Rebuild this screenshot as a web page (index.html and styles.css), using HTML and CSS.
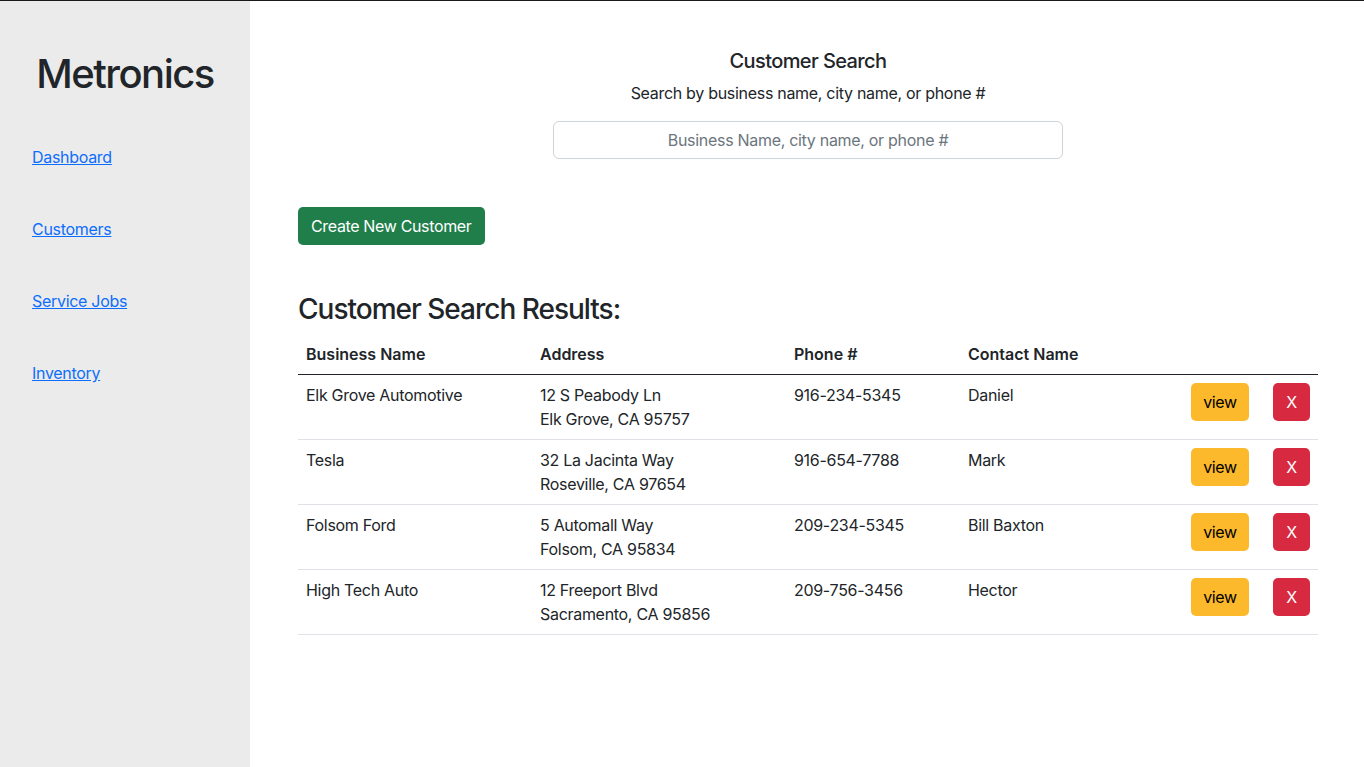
FILE: index.html
```html
<!DOCTYPE html>
<html lang="en">
<head>
<meta charset="utf-8">
<title>Metronics - Customers</title>
<link rel="stylesheet" href="styles.css">
</head>
<body>
<div class="app">
  <aside class="sidebar">
    <h1 class="brand">Metronics</h1>
    <nav class="nav">
      <a href="#">Dashboard</a>
      <a href="#">Customers</a>
      <a href="#">Service Jobs</a>
      <a href="#">Inventory</a>
    </nav>
  </aside>
  <main class="main">
    <section class="search">
      <h5 class="search-title">Customer Search</h5>
      <p class="search-sub">Search by business name, city name, or phone #</p>
      <input class="search-input" type="text" placeholder="Business Name, city name, or phone #">
    </section>
    <div class="actions">
      <button class="btn btn-success">Create New Customer</button>
    </div>
    <h3 class="results-title">Customer Search Results:</h3>
    <table class="table">
      <colgroup>
        <col class="c1"><col class="c2"><col class="c3"><col class="c4"><col class="c5"><col class="c6">
      </colgroup>
      <thead>
        <tr><th>Business Name</th><th>Address</th><th>Phone #</th><th>Contact Name</th><th></th><th></th></tr>
      </thead>
      <tbody>
        <tr>
          <td>Elk Grove Automotive</td>
          <td>12 S Peabody Ln<br>Elk Grove, CA 95757</td>
          <td>916-234-5345</td>
          <td>Daniel</td>
          <td><button class="btn btn-warning">view</button></td>
          <td><button class="btn btn-danger">X</button></td>
        </tr>
        <tr>
          <td>Tesla</td>
          <td>32 La Jacinta Way<br>Roseville, CA 97654</td>
          <td>916-654-7788</td>
          <td>Mark</td>
          <td><button class="btn btn-warning">view</button></td>
          <td><button class="btn btn-danger">X</button></td>
        </tr>
        <tr>
          <td>Folsom Ford</td>
          <td>5 Automall Way<br>Folsom, CA 95834</td>
          <td>209-234-5345</td>
          <td>Bill Baxton</td>
          <td><button class="btn btn-warning">view</button></td>
          <td><button class="btn btn-danger">X</button></td>
        </tr>
        <tr>
          <td>High Tech Auto</td>
          <td>12 Freeport Blvd<br>Sacramento, CA 95856</td>
          <td>209-756-3456</td>
          <td>Hector</td>
          <td><button class="btn btn-warning">view</button></td>
          <td><button class="btn btn-danger">X</button></td>
        </tr>
      </tbody>
    </table>
  </main>
</div>
</body>
</html>
```

FILE: styles.css
```css
* { box-sizing: border-box; }
html, body { margin: 0; padding: 0; }
body {
  font-family: Inter, "Liberation Sans", sans-serif;
  font-size: 16px;
  line-height: 24px;
  letter-spacing: -0.3px;
  color: #212529;
  background: #fff;
}
.app {
  display: flex;
  min-height: 767px;
  border-top: 1px solid #1a1a1a;
}
.sidebar {
  width: 250px;
  flex: 0 0 250px;
  background: #ebebeb;
  padding: 49px 0 0 0;
}
.brand {
  margin: 0;
  text-align: center;
  font-size: 40px;
  line-height: 48px;
  font-weight: 500;
  letter-spacing: -1.5px;
}
.nav {
  display: flex;
  flex-direction: column;
  align-items: flex-start;
  gap: 48px;
  padding: 47px 0 0 32px;
}
.nav a {
  color: #0d6efd;
  text-decoration: underline;
  line-height: 24px;
}
.main {
  flex: 1;
  padding: 48px 46px 0 48px;
}
.search {
  text-align: center;
  display: flex;
  flex-direction: column;
  align-items: center;
}
.search-title {
  margin: 0 0 8px;
  font-size: 20px;
  line-height: 24px;
  font-weight: 500;
  letter-spacing: -0.6px;
}
.search-sub {
  margin: 0 0 16px;
  font-size: 16px;
}
.search-input {
  width: 510px;
  height: 38px;
  border: 1px solid #ced4da;
  border-radius: 6px;
  padding: 6px 12px;
  font: inherit;
  letter-spacing: -0.3px;
  text-align: center;
  color: #212529;
}
.search-input::placeholder { color: #6c757d; }
.actions {
  margin-top: 48px;
}
.btn {
  font: inherit;
  font-size: 16px;
  line-height: 24px;
  letter-spacing: -0.35px;
  padding: 6px 12px;
  border: 1px solid transparent;
  border-radius: 5px;
  cursor: pointer;
}
.btn-success { background: #1f7e4a; color: #fff; }
.btn-warning { background: #fdb92c; color: #000; width: 58px; padding: 6px 0; }
.btn-danger { background: #d72a41; color: #fff; width: 37px; padding: 6px 0; }
.results-title {
  margin: 48px 0 8px;
  font-size: 28px;
  line-height: 33px;
  font-weight: 500;
  letter-spacing: -1px;
}
.table {
  width: 1020px;
  border-collapse: collapse;
  table-layout: fixed;
}
.c1 { width: 234px; }
.c2 { width: 254px; }
.c3 { width: 174px; }
.c4 { width: 223px; }
.c5 { width: 82px; }
.c6 { width: 53px; }
.table th, .table td {
  padding: 8px;
  text-align: left;
  vertical-align: top;
}
.table th {
  font-weight: 600;
  letter-spacing: 0;
  border-bottom: 1px solid #212529;
}
.table td {
  border-bottom: 1px solid #dee2e6;
}
```
